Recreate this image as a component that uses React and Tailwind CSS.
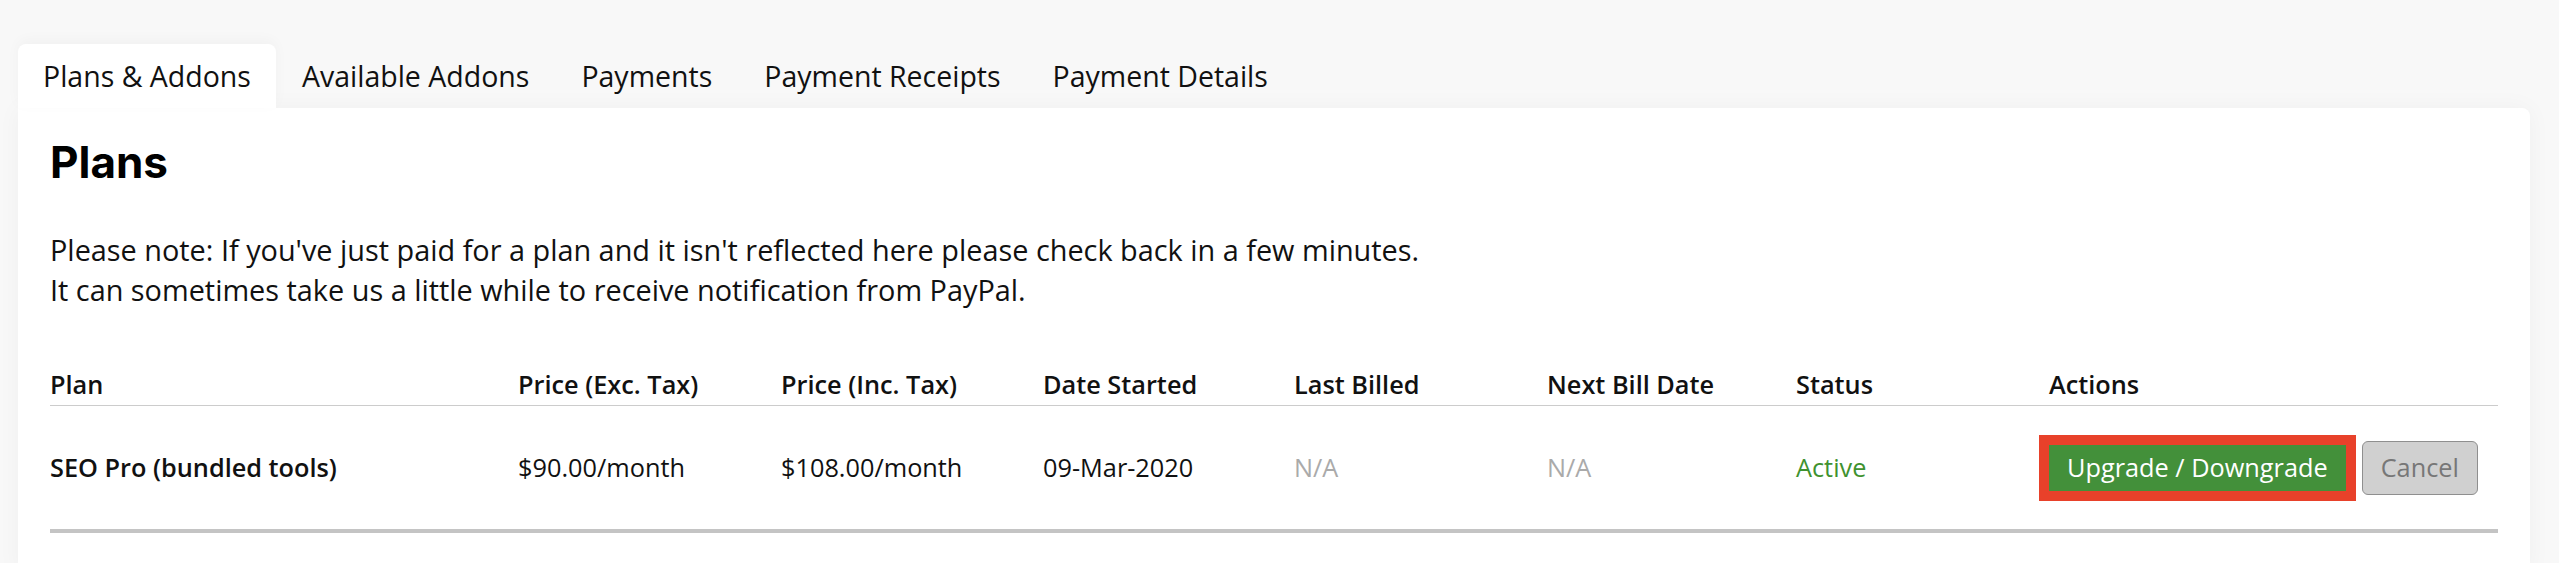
import React from "react";

const tabs = ["Plans & Addons", "Available Addons", "Payments", "Payment Receipts", "Payment Details"];

export default function App() {
    return (
        <div className="min-h-[563px] bg-[#f8f8f8] pt-[44px] pl-[18px] pr-[29px] font-['Open_Sans',sans-serif] text-[#111]">
            {/* tabs */}
            <div className="flex">
                {tabs.map((tab, i) => (
                    <div
                        key={tab}
                        className={
                            i === 0
                                ? "h-[64px] px-[25px] flex items-center text-[28.5px] bg-white rounded-t-lg shadow-[0_-4px_14px_rgba(0,0,0,0.03)]"
                                : "h-[64px] px-[26px] flex items-center text-[28.5px]"
                        }
                    >
                        {tab}
                    </div>
                ))}
            </div>

            <div className="bg-white rounded-b-lg rounded-tr-lg px-8 pt-8 pb-10 shadow-[0_0_24px_rgba(0,0,0,0.04)]">
                <h1 className="font-['Inter',sans-serif] font-bold text-[44px] leading-[44px] text-black">
                    Plans
                </h1>
                <p className="mt-[46px] text-[28.85px] leading-[40px]">
                    Please note: If you've just paid for a plan and it isn't reflected here please check back in a few minutes.
                    <br />
                    It can sometimes take us a little while to receive notification from PayPal.
                </p>

                {/* table */}
                <div className="mt-[55px] text-[25.3px]">
                    <div className="grid grid-cols-[468px_263px_262px_251px_253px_249px_253px_1fr] h-[41px] items-center font-semibold border-b border-[#cccccc]">
                        <div>Plan</div>
                        <div>Price (Exc. Tax)</div>
                        <div>Price (Inc. Tax)</div>
                        <div>Date Started</div>
                        <div>Last Billed</div>
                        <div>Next Bill Date</div>
                        <div>Status</div>
                        <div>Actions</div>
                    </div>
                    <div className="grid grid-cols-[468px_263px_262px_251px_253px_249px_253px_1fr] h-[127px] items-center border-b-4 border-[#c4c4c4]">
                        <div className="font-semibold">SEO Pro (bundled tools)</div>
                        <div>$90.00/month</div>
                        <div>$108.00/month</div>
                        <div>09-Mar-2020</div>
                        <div className="text-[#aaaaaa]">N/A</div>
                        <div className="text-[#aaaaaa]">N/A</div>
                        <div className="text-[#3f922f]">Active</div>
                        <div className="flex items-center">
                            <button className="h-[46px] px-[18px] bg-[#43903a] text-white outline-[10px] outline-solid outline-[#e8412a]">
                                Upgrade / Downgrade
                            </button>
                            <button className="ml-[16px] h-[54px] px-[18px] bg-[#d0d0d0] text-[#777777] border border-[#8f8f8f] rounded-md">
                                Cancel
                            </button>
                        </div>
                    </div>
                </div>
            </div>
        </div>
    );
}
